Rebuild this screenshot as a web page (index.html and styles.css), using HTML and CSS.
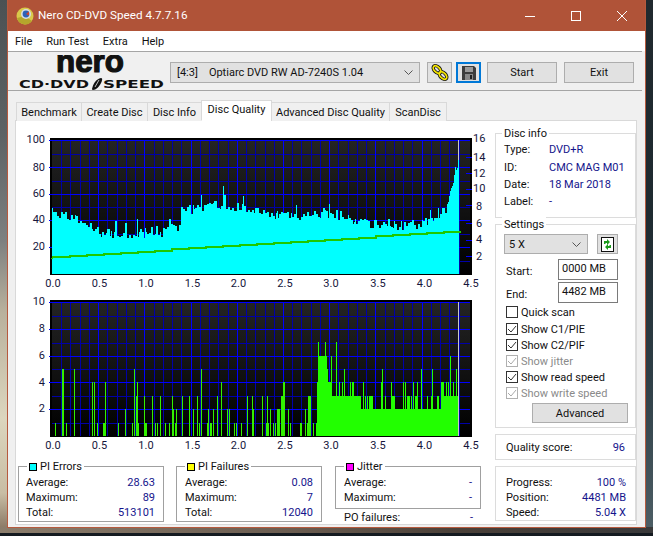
FILE: index.html
```html
<!DOCTYPE html>
<html lang="en">
<head>
<meta charset="utf-8">
<title>Nero CD-DVD Speed 4.7.7.16</title>
<link rel="stylesheet" href="styles.css">
<script src="chart.js" defer></script>
</head>
<body>
<div class="window">
  <header class="titlebar">
    <svg class="app-icon" viewBox="0 0 18 18" width="18" height="18">
      <circle cx="9" cy="9" r="8.5" fill="#d8c94a"/>
      <path d="M1 11a8.5 8.5 0 0 0 15 3L9 9z" fill="#b5a62c"/>
      <circle cx="10" cy="7" r="5" fill="#d8dde6"/>
      <circle cx="10" cy="7" r="3.4" fill="#2f62b8"/>
      <path d="M10 7l3-2.5v4z" fill="#d2452c"/>
    </svg>
    <span class="title">Nero CD-DVD Speed 4.7.7.16</span>
    <div class="win-btn"><svg viewBox="0 0 10 10" width="10" height="10"><path d="M0 5.5h10" stroke="#fff" fill="none"/></svg></div>
    <div class="win-btn"><svg viewBox="0 0 10 10" width="10" height="10"><rect x=".5" y=".5" width="9" height="9" stroke="#fff" fill="none"/></svg></div>
    <div class="win-btn"><svg viewBox="0 0 10 10" width="10" height="10"><path d="M0 0l10 10M10 0L0 10" stroke="#fff" fill="none"/></svg></div>
  </header>
  <nav class="menu"><span>File</span><span>Run Test</span><span>Extra</span><span>Help</span></nav>
  <div class="toolbar">
    <svg class="logo" viewBox="15 55 155 35" width="155" height="35">
      <text class="logo-nero" x="56" y="72" textLength="68" lengthAdjust="spacingAndGlyphs">nero</text>
      <text class="logo-sub" x="19" y="87.5" textLength="70" lengthAdjust="spacingAndGlyphs">CD·DVD</text>
      <path d="M92 89c1-5 4-10 9-11 2 0 1 3 0 5-2 4-5 7-8 7-1 0-1-1-1-1z" fill="#111"/>
      <path d="M95 87l4-7" stroke="#eee" stroke-width=".8"/>
      <text class="logo-sub" x="103" y="87.5" textLength="61" lengthAdjust="spacingAndGlyphs">SPEED</text>
    </svg>
    <div class="combo drive"><span><span class="ratio">[4:3]</span>Optiarc DVD RW AD-7240S 1.04</span>
      <svg viewBox="0 0 9 5" width="9" height="5"><path d="M.5.5l4 4 4-4" stroke="#555" fill="none"/></svg></div>
    <button class="tool-btn chain" type="button">
      <svg viewBox="0 0 18 17" width="18" height="17">
        <g fill="none">
          <ellipse cx="6" cy="5.500" rx="4.500" ry="2.800" transform="rotate(45 6 5.500)" stroke="#111" stroke-width="3.400"/>
          <ellipse cx="12" cy="11.500" rx="4.500" ry="2.800" transform="rotate(45 12 11.500)" stroke="#111" stroke-width="3.400"/>
          <ellipse cx="6" cy="5.500" rx="4.500" ry="2.800" transform="rotate(45 6 5.500)" stroke="#f4e400" stroke-width="1.800"/>
          <ellipse cx="12" cy="11.500" rx="4.500" ry="2.800" transform="rotate(45 12 11.500)" stroke="#f4e400" stroke-width="1.800"/>
        </g>
      </svg>
    </button>
    <button class="tool-btn save" type="button">
      <svg viewBox="0 0 14 14" width="14" height="14">
        <path d="M0 0h12l2 2v12H0z" fill="#3c3c3c"/>
        <rect x="3" y="1" width="8" height="5" fill="#9a9a9a"/>
        <rect x="3" y="8" width="8" height="6" fill="#888"/>
        <rect x="8" y="9" width="2" height="4" fill="#222"/>
      </svg>
    </button>
    <button class="cmd-btn" type="button">Start</button>
    <button class="cmd-btn" type="button">Exit</button>
  </div>
  <div class="tabs">
    <span class="tab t1">Benchmark</span><span class="tab t2">Create Disc</span><span class="tab t3">Disc Info</span><span class="tab active t4">Disc Quality</span><span class="tab t5">Advanced Disc Quality</span><span class="tab t6">ScanDisc</span>
  </div>
  <main class="panel">
    <section class="charts">
      <svg class="chart" id="chart1" viewBox="16 130 475 162" width="475" height="162">
        <g class="plot"></g>
        <g class="axis end">
          <text x="45" y="143">100</text><text x="45" y="171">80</text><text x="45" y="197">60</text><text x="45" y="223">40</text><text x="45" y="250">20</text>
        </g>
        <g class="axis">
          <text x="473" y="142">16</text><text x="473" y="161">14</text><text x="473" y="177">12</text><text x="473" y="192">10</text><text x="476" y="210">8</text><text x="476" y="227">6</text><text x="476" y="243">4</text><text x="476" y="260">2</text>
        </g>
        <g class="axis mid">
          <text x="53" y="287">0.0</text><text x="99.500" y="287">0.5</text><text x="146" y="287">1.0</text><text x="192.500" y="287">1.5</text><text x="238.500" y="287">2.0</text><text x="285" y="287">2.5</text><text x="331" y="287">3.0</text><text x="378" y="287">3.5</text><text x="424.500" y="287">4.0</text><text x="471" y="287">4.5</text>
        </g>
      </svg>
      <svg class="chart" id="chart2" viewBox="16 292 475 162" width="475" height="162">
        <g class="plot"></g>
        <g class="axis end">
          <text x="45" y="305">10</text><text x="45" y="332">8</text><text x="45" y="359">6</text><text x="45" y="386">4</text><text x="45" y="412">2</text>
        </g>
        <g class="axis mid">
          <text x="53" y="449">0.0</text><text x="99.500" y="449">0.5</text><text x="146" y="449">1.0</text><text x="192.500" y="449">1.5</text><text x="238.500" y="449">2.0</text><text x="285" y="449">2.5</text><text x="331" y="449">3.0</text><text x="378" y="449">3.5</text><text x="424.500" y="449">4.0</text><text x="471" y="449">4.5</text>
        </g>
      </svg>
      <div class="stats">
        <div class="group stat-box">
          <span class="legend"><i class="swatch cyan"></i>PI Errors</span>
          <div class="row"><span>Average:</span><b>28.63</b></div>
          <div class="row"><span>Maximum:</span><b>89</b></div>
          <div class="row"><span>Total:</span><b>513101</b></div>
        </div>
        <div class="group stat-box">
          <span class="legend"><i class="swatch yellow"></i>PI Failures</span>
          <div class="row"><span>Average:</span><b>0.08</b></div>
          <div class="row"><span>Maximum:</span><b>7</b></div>
          <div class="row"><span>Total:</span><b>12040</b></div>
        </div>
        <div class="jitter-col">
          <div class="group stat-box jitter">
            <span class="legend"><i class="swatch magenta"></i>Jitter</span>
            <div class="row"><span>Average:</span><b>-</b></div>
            <div class="row"><span>Maximum:</span><b>-</b></div>
          </div>
          <div class="row po"><span>PO failures:</span><b>-</b></div>
        </div>
      </div>
    </section>
    <aside class="side">
      <div class="group light disc-info">
        <span class="legend">Disc info</span>
        <div class="info-row"><span>Type:</span><b>DVD+R</b></div>
        <div class="info-row"><span>ID:</span><b>CMC MAG M01</b></div>
        <div class="info-row"><span>Date:</span><b>18 Mar 2018</b></div>
        <div class="info-row"><span>Label:</span><b>-</b></div>
      </div>
      <div class="group light settings">
        <span class="legend">Settings</span>
        <div class="speed-row">
          <div class="combo speed"><span>5 X</span>
            <svg viewBox="0 0 9 5" width="9" height="5"><path d="M.5.5l4 4 4-4" stroke="#555" fill="none"/></svg></div>
          <button class="tool-btn refresh" type="button">
            <svg viewBox="0 0 13 15" width="13" height="15">
              <rect x=".5" y=".5" width="12" height="14" fill="#fff" stroke="#111"/>
              <path d="M3 7V4h3V2l3 3-3 3V6H4.500v1z" fill="#1c9a1c"/>
              <path d="M10 8v3H7v2L4 10l3-3v2h1.500V8z" fill="#1c9a1c"/>
            </svg>
          </button>
        </div>
        <div class="range-row"><span class="range-label">Start:</span><div class="field">0000 MB</div></div>
        <div class="range-row"><span class="range-label">End:</span><div class="field">4482 MB</div></div>
        <div class="check quick"><i class="box"></i>Quick scan</div>
        <div class="check"><i class="box"><svg viewBox="0 0 12 12" width="12" height="12"><path d="M2 6l3 3 5-6" fill="none" stroke="#333"/></svg></i>Show C1/PIE</div>
        <div class="check"><i class="box"><svg viewBox="0 0 12 12" width="12" height="12"><path d="M2 6l3 3 5-6" fill="none" stroke="#333"/></svg></i>Show C2/PIF</div>
        <div class="check off"><i class="box"><svg viewBox="0 0 12 12" width="12" height="12"><path d="M2 6l3 3 5-6" fill="none" stroke="#aaa"/></svg></i>Show jitter</div>
        <div class="check"><i class="box"><svg viewBox="0 0 12 12" width="12" height="12"><path d="M2 6l3 3 5-6" fill="none" stroke="#333"/></svg></i>Show read speed</div>
        <div class="check off"><i class="box"><svg viewBox="0 0 12 12" width="12" height="12"><path d="M2 6l3 3 5-6" fill="none" stroke="#aaa"/></svg></i>Show write speed</div>
        <button class="cmd-btn advanced" type="button">Advanced</button>
      </div>
      <div class="group light quality"><span>Quality score:</span><b>96</b></div>
      <div class="group light progress">
        <div class="row"><span>Progress:</span><b>100 %</b></div>
        <div class="row"><span>Position:</span><b>4481 MB</b></div>
        <div class="row"><span>Speed:</span><b>5.04 X</b></div>
      </div>
    </aside>
  </main>
</div>
</body>
</html>
```
FILE: styles.css
```css
* { box-sizing: border-box; }
html, body { margin: 0; height: 100%; }
body {
  width: 653px; height: 536px; overflow: hidden;
  font: 11px/15px Roboto, "Liberation Sans", sans-serif; color: #111;
  background:
    linear-gradient(#141a20, #141a20) left bottom / 100% 3px no-repeat,
    linear-gradient(to right, #8b7d6c, #6a5c50 45%, #4a4038 70%, #39393a) left bottom / 100% 9px no-repeat,
    linear-gradient(#4b5153, #5c6264 25%, #7d8080 45%, #b8b09c 58%, #dcd6be 78%, #c8bda4 92%, #7e6a58) left top / 8px 100% no-repeat,
    linear-gradient(#20292e, #1e2a30 40%, #2e3e46 70%, #4e5f66) right top / 8px 100% no-repeat;
}
b { font-weight: 400; color: #14148c; }
.window {
  margin-left: 7px; width: 639px; height: 528px;
  background: #f0f0f0; border: 1px solid #b65a3e; border-top: 0;
}
.titlebar { height: 31px; background: #b05338; color: #fff; display: flex; align-items: center; padding-left: 8px; }
.app-icon { margin-right: 4px; }
.title { flex: 1; font-size: 11.700px; }
.win-btn { width: 46px; height: 31px; display: flex; align-items: center; justify-content: center; }
.menu { height: 20px; background: #fff; display: flex; gap: 14px; padding: 3px 0 0 7px; }
.toolbar {
  height: 40px; margin-right: 3px; padding: 3px 0 0 7px;
  border-top: 1px solid #a5a5a5; border-bottom: 1px solid #a5a5a5;
  display: flex; align-items: center;
}
.logo { flex: none; }
.logo-nero { font: 700 32px "Liberation Sans", sans-serif; fill: #111; stroke: #111; stroke-width: 1.200px; }
.logo-sub { font: 700 10px "DejaVu Sans", sans-serif; fill: #111; }
.combo {
  height: 21px; background: #e1e1e1; border: 1px solid #adadad;
  display: flex; align-items: center; justify-content: space-between; padding: 0 6px;
}
.drive { width: 250px; }
.ratio { margin-right: 11px; }
.tool-btn { height: 21px; width: 25px; padding: 0; background: #e1e1e1; border: 1px solid #adadad; display: flex; align-items: center; justify-content: center; }
.chain { margin-left: 7px; }
.save { margin-left: 4px; border: 2px solid #0078d7; }
.cmd-btn { width: 70px; height: 21px; padding: 0; background: #e1e1e1; border: 1px solid #adadad; font: inherit; color: #111; margin-left: 6px; }
.cmd-btn + .cmd-btn { margin-left: 7px; }
.tabs { display: flex; align-items: flex-end; height: 21px; margin: 9px 0 -1px 9px; position: relative; z-index: 1; }
.tab { height: 19px; border: 1px solid #d9d9d9; border-bottom: 0; margin-left: -1px; padding-top: 2px; text-align: center; background: #f0f0f0; white-space: nowrap; }
.tab.active { height: 21px; background: #fff; padding-top: 1px; border-bottom: 1px solid #fff; }
.t1 { width: 66px; } .t2 { width: 67px; } .t3 { width: 55px; } .t4 { width: 71px; } .t5 { width: 119px; } .t6 { width: 58px; }
.panel { height: 405px; width: 622px; margin-left: 7px; background: #fff; border: 1px solid #d9d9d9; display: flex; }
.charts { width: 479px; flex: none; padding-top: 9px; }
.chart { display: block; }
.axis text { font: 11px Roboto, "Liberation Sans", sans-serif; fill: #16163c; }
.axis.end text { text-anchor: end; }
.axis.mid text { text-anchor: middle; }
.stats { display: flex; gap: 12px; padding-left: 2px; margin-top: 12px; }
.group { position: relative; border: 1px solid #a0a0a0; }
.group.light { border-color: #dcdcdc; }
.legend { position: absolute; top: -8px; left: 8px; background: #fff; padding: 0 2px; display: flex; align-items: center; white-space: nowrap; }
.group.light .legend { left: 6px; }
.swatch { width: 8px; height: 8px; border: 1px solid #000; margin-right: 3px; }
.cyan { background: #00ffff; } .yellow { background: #ffff00; } .magenta { background: #ff00ff; }
.row { display: flex; justify-content: space-between; }
.stat-box { width: 146px; height: 56px; padding: 8px 8px 0 7px; }
.stat-box + .stat-box { padding-left: 8px; }
.jitter-col { width: 146px; margin-left: 1px; }
.jitter { height: 43px; padding-left: 8px; }
.po { padding: 1px 8px 0 9px; }
.side { width: 141px; padding-top: 12px; display: flex; flex-direction: column; }
.disc-info { height: 85px; padding: 7px 0 0 8px; flex: none; }
.info-row { display: grid; grid-template-columns: 45px 1fr; height: 17.400px; align-items: center; }
.settings { height: 204px; margin-top: 6px; padding: 9px 0 0 8px; flex: none; }
.speed-row { display: flex; gap: 9px; }
.speed { width: 84px; height: 20px; padding-left: 4px; }
.refresh { width: 21px; height: 20px; }
.range-row { display: flex; align-items: center; justify-content: space-between; width: 112px; margin: 2px 0 0 2px; height: 21px; }
.speed-row + .range-row { margin-top: 5px; }
.range-label { padding-top: 4px; }
.field { width: 60px; height: 21px; border: 1px solid #7a7a7a; padding: 1px 0 0 3px; }
.check { display: flex; align-items: center; height: 16px; margin-left: 2px; color: #111; }
.quick { margin: 1px 0 1px 2px; }
.box { width: 12px; height: 12px; border: 1px solid #333; margin-right: 3px; display: block; line-height: 0; background: #fff; flex: none; }
.box svg { margin: -1px; display: block; }
.off { color: #8a8a8a; }
.off .box { border-color: #b0b0b0; }
.advanced { display: block; width: 96px; height: 20px; margin: 2px 0 0 28px; }
.quality { height: 26px; margin-top: 6px; padding: 0 10px; display: flex; align-items: center; justify-content: space-between; flex: none; }
.progress { height: 55px; margin-top: 6px; padding: 8px 9px 0 10px; flex: none; }
.progress .row { height: 15px; }
```
FILE: chart.js
```js
(function () {
  var NS = 'http://www.w3.org/2000/svg';
  function el(parent, name, attrs) {
    var e = document.createElementNS(NS, name);
    for (var k in attrs) e.setAttribute(k, attrs[k]);
    parent.appendChild(e);
    return e;
  }
  var seed = 7;
  function rnd() { seed = (seed * 16807) % 2147483647; return seed / 2147483647; }

  function frame(svg, id, top, bottom, majors, minors) {
    var g = svg.querySelector('.plot');
    var defs = el(svg, 'defs', {});
    var lg = el(defs, 'linearGradient', { id: id, x1: 0, y1: 0, x2: 0, y2: 1 });
    el(lg, 'stop', { offset: 0, 'stop-color': '#242424' });
    el(lg, 'stop', { offset: 1, 'stop-color': '#000000' });
    el(g, 'rect', { x: 50, y: top - 2, width: 422, height: bottom - top + 3, fill: '#000' });
    el(g, 'rect', { x: 52, y: top, width: 418, height: bottom - top, fill: 'url(#' + id + ')' });
    var i, x;
    for (i = 0; i <= 45; i++) {
      x = Math.round(52 + i * 9.24) + 0.5;
      if (i % 5) el(g, 'line', { x1: x, x2: x, y1: top, y2: bottom, stroke: '#0000a8' });
    }
    minors.forEach(function (y) { el(g, 'line', { x1: 52, x2: 470, y1: y, y2: y, stroke: '#0000a8' }); });
    for (i = 5; i < 45; i += 5) {
      x = Math.round(52 + i * 9.24) + 0.5;
      el(g, 'line', { x1: x, x2: x, y1: top, y2: bottom, stroke: '#0000ff' });
    }
    majors.forEach(function (y) {
      el(g, 'line', { x1: 49, x2: 470, y1: y, y2: y, stroke: '#0000ff' });
    });
    return g;
  }
  function data(g) { return el(g, 'g', { 'shape-rendering': 'crispEdges' }); }

  /* chart 1: PI errors */
  var svg1 = document.getElementById('chart1');
  var base1 = 274;
  var p1 = frame(svg1, 'bg1', 140, base1, [140.500, 167.500, 194.500, 220.500, 247.500], [154.500, 181.500, 207.500, 234.500, 261.500]);
  [157, 173, 189, 205, 223, 240, 256].forEach(function (y) {
    el(p1, 'line', { x1: 466, x2: 472, y1: y + 0.5, y2: y + 0.5, stroke: '#0000ff' });
  });
  var env = [[52,47],[70,42],[85,38],[98,32],[130,29],[144,30],[155,33],[175,34.5],[180,36],[180.500,50],[195,48],[215,52],[245,50],[262,46],[284,44],[305,44],[330,45],[345,42],[365,38],[390,37],[403,36],[420,38],[433,41],[440,46],[447,50],[450,62],[453,68],[455,80],[456.500,76],[458,86]];
  function envAt(x) {
    for (var i = 1; i < env.length; i++) {
      if (x <= env[i][0]) {
        var a = env[i - 1], b = env[i];
        return a[1] + (b[1] - a[1]) * (x - a[0]) / (b[0] - a[0]);
      }
    }
    return 86;
  }
  var spikes = { 223: 66, 201: 59, 243: 58, 322: 58, 329: 52, 310: 52, 222: 55, 137: 41, 168: 41, 75: 44 };
  var d1 = data(p1);
  var path = '';
  var x = 52, v, h, w;
  while (x < 459) {
    w = x >= 448 ? 1 : (rnd() > 0.3 ? 2 : 1);
    v = envAt(x);
    if (x < 448) v += (rnd() - 0.55) * 7;
    if (x < 448 && rnd() > 0.94) v += 3 + rnd() * 4;
    if (x < 448 && rnd() > 0.96) v -= 5;
    if (spikes[x]) { v = spikes[x]; w = 1; }
    h = Math.round(v * 1.34);
    path += 'M' + x + ' ' + base1 + 'v-' + h + 'h' + w + 'v' + h + 'z';
    x += w;
  }
  el(d1, 'path', { d: path, fill: '#00ffff' });
  var line = 'M52 ' + (base1 - 15);
  for (x = 53; x <= 457; x += 17) {
    var hh = Math.round(17 + (x - 53) * 25.7 / 404);
    line += 'L' + x + ' ' + (base1 - hh) + 'h17';
  }
  el(d1, 'path', { d: line, fill: 'none', stroke: '#20c800', 'stroke-width': 1.500 });
  el(d1, 'rect', { x: 458, y: 140, width: 1, height: 20, fill: '#c8c8c8' });

  /* chart 2: PI failures */
  var svg2 = document.getElementById('chart2');
  var base2 = 436;
  var p2 = frame(svg2, 'bg2', 302, base2, [302.500, 329.500, 356.500, 382.500, 409.500], [316.500, 343.500, 369.500, 396.500, 423.500]);
  var U = 13.4;
  var d2 = data(p2);
  function bar(px, w, val, col) {
    var h = Math.round(val * U);
    el(d2, 'rect', { x: Math.round(px), y: base2 - h, width: w, height: h, fill: col || '#33f000' });
  }
  [[166,1],[185,5],[190,5],[199,1],[223,5],[277,4],[283,4],[292,1],[316,4],[355,1],[376,2],[397,1],[403,5],[412,4],[433,3],[457,3],[466,1],[472,1],[481,3],[496,1],[508,1],[517,3],[520,2],[526,1],[529,2],[547,3],[568,3],[580,2],[592,3],[598,1],[604,5],[622,1],[625,2],[640,2],[652,3],[664,4],[682,2],[688,2],[703,1],[709,1],[724,1],[742,3],[757,3],[760,2]]
    .forEach(function (b) { bar(b[0] / 3, 1, b[1]); });
  [[310,318,1],[408,414,3],[408,418,1],[434,441,1],[631,637,1],[622,628,1],[525,532,1]]
    .forEach(function (b) { bar(b[0] / 3, Math.round((b[1] - b[0]) / 3), b[2]); });
  function R(z) { return 260 + z / 3; }
  [[7,3],[22,3],[31,2],[40,1],[46,1],[85,2],[91,1],[136,2],[160,1],[167,1]]
    .forEach(function (b) { bar(R(b[0]), 1, b[1]); });
  [[19,28,1],[52,61,2],[64,73,3],[70,76,4],[120,127,1],[142,153,1],[145,154,3]]
    .forEach(function (b) { bar(R(b[0]), Math.round((b[1] - b[0]) / 3), b[2]); });
  var G = '#22ff00';
  /* solid block from x = 2.85 to the end */
  [[168,172,1],[172,175,4],[175,202,6],[202,205,5],[205,216,4],[216,290,3],[290,303,3],[303,309,2],[309,340,2],[340,597,2]]
    .forEach(function (b) { bar(R(b[0]), Math.round((b[1] - b[0]) / 3), b[2], G); });
  [[316,319],[322,325],[328,340],[364,371],[376,380],[394,407],[442,451],[453,456],[466,473],[502,505],[514,521],[532,539],[553,597]]
    .forEach(function (b) { bar(R(b[0]), Math.round((b[1] - b[0]) / 3), 3, G); });
  [[175,7],[196,7],[213,6],[229,7],[238,4],[246,4],[253,5],[271,4],[277,4],[280,4],[310,4],[364,4],[367,5],[394,4],[430,4],[436,4],[460,4],[472,4],[484,5],[517,5],[544,4],[547,4],[550,4],[559,4],[565,4],[571,6],[580,4],[589,5]]
    .forEach(function (b) { bar(R(b[0]), 1, b[1], G); });
  el(d2, 'rect', { x: 458, y: 302, width: 1, height: 134, fill: '#c8c8c8' });
})();
```
